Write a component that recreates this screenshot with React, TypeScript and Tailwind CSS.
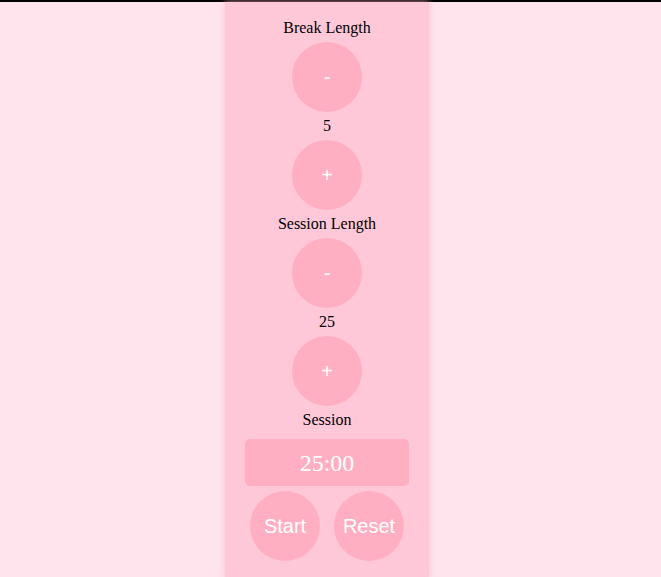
import React from "react";

const Circle = ({ children }: { children: React.ReactNode }) => (
  <button className="my-[5px] flex h-[70px] w-[70px] items-center justify-center rounded-full bg-[#ffafc1] text-[20px] text-white [font-family:'Liberation_Sans',Arial,sans-serif]">
    {children}
  </button>
);

const Label = ({ children }: { children: React.ReactNode }) => (
  <div className="h-[18px] text-[16px] leading-[18px] text-black">{children}</div>
);

export default function App() {
  return (
    <div className="min-h-[577px] border-t-2 border-black bg-[#ffe4ed] [font-family:'Liberation_Serif','Times_New_Roman',serif]">
      <div className="ml-[225px] flex min-h-[575px] w-[204px] flex-col items-center bg-[#ffc8d8] pt-[17px] shadow-[0_0_6px_rgba(255,180,200,0.8)]">
        <Label>Break Length</Label>
        <Circle>-</Circle>
        <Label>5</Label>
        <Circle>+</Circle>
        <Label>Session Length</Label>
        <Circle>-</Circle>
        <Label>25</Label>
        <Circle>+</Circle>
        <Label>Session</Label>
        <div className="mt-[10px] flex h-[47px] w-[164px] items-center justify-center rounded-[5px] bg-[#ffafc1] text-[24px] text-white [font-family:'Liberation_Serif','Times_New_Roman',serif]">
          25:00
        </div>
        <div className="mt-[5px] flex gap-[14px]">
          <button className="flex h-[70px] w-[70px] items-center justify-center rounded-full bg-[#ffafc1] text-[20px] text-white [font-family:'Liberation_Sans',Arial,sans-serif]">
            Start
          </button>
          <button className="flex h-[70px] w-[70px] items-center justify-center rounded-full bg-[#ffafc1] text-[20px] text-white [font-family:'Liberation_Sans',Arial,sans-serif]">
            Reset
          </button>
        </div>
      </div>
    </div>
  );
}
